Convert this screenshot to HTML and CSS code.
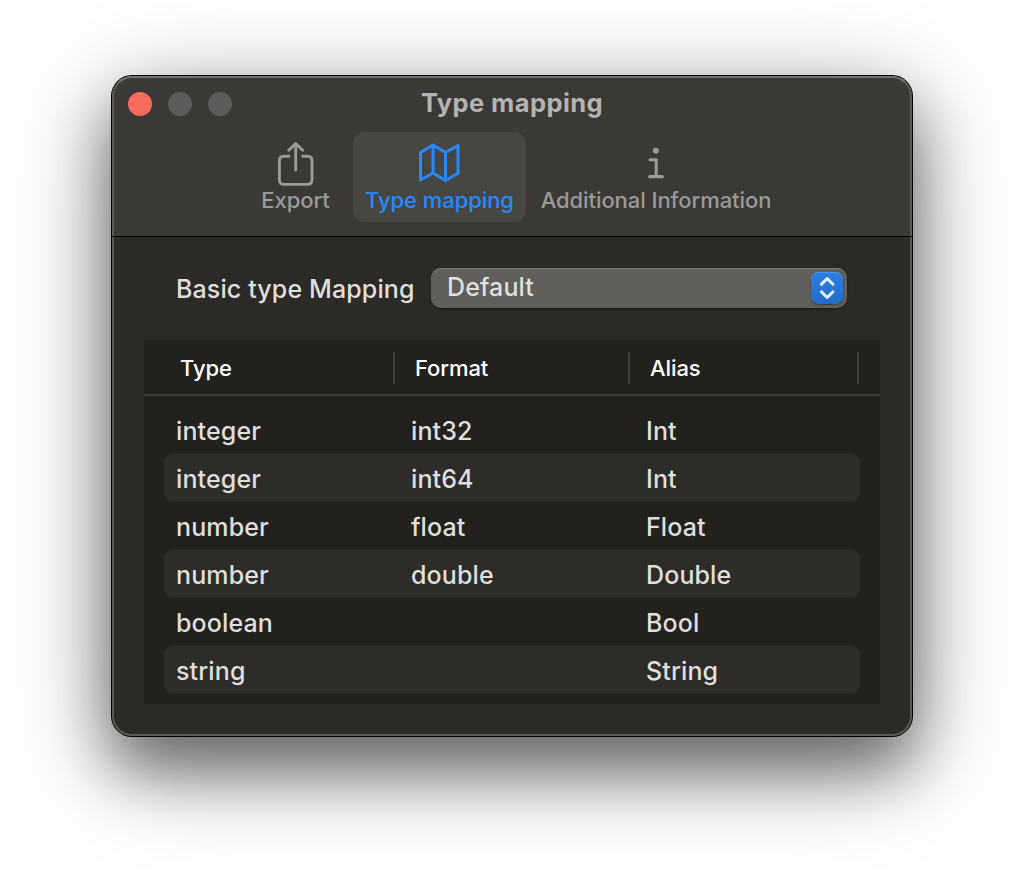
FILE: index.html
```html
<!DOCTYPE html>
<html lang="en">
<head>
<meta charset="utf-8">
<title>Type mapping</title>
<link rel="stylesheet" href="styles.css">
</head>
<body>
<main class="window">
  <header class="toolbar">
    <div class="titlebar">
      <div class="lights"><span class="light close"></span><span class="light"></span><span class="light"></span></div>
      <h1 class="title"><span>Type mapping</span></h1>
    </div>
    <nav class="tabs">
      <div class="tab export">
        <svg class="icon" width="48" height="48" viewBox="0 0 48 48" fill="none" stroke="currentColor" stroke-width="2.9" stroke-linecap="round" stroke-linejoin="round"><path d="M18 16.2H12Q7.4 16.2 7.4 20.8V39.8Q7.4 44.4 12 44.4H35.4Q40 44.4 40 39.8V20.8Q40 16.2 35.4 16.2H29.4" stroke-linecap="butt"/><path d="M23.7 30V3.8M16.7 10.2L23.7 3.6L30.7 10.2"/></svg>
        <span class="tab-label">Export</span>
      </div>
      <div class="tab selected">
        <svg class="icon" width="48" height="48" viewBox="0 0 48 48" fill="none" stroke="currentColor" stroke-width="3" stroke-linejoin="round"><path d="M4.5 12.5L17 5L29.5 12.5L42 5.5V33.3L29.5 40.5L17 33L4.5 40ZM17 5V33M29.5 12.5V40.5"/></svg>
        <span class="tab-label">Type mapping</span>
      </div>
      <div class="tab info">
        <svg class="icon" width="48" height="48" viewBox="0 0 48 48" fill="none" stroke="currentColor" stroke-width="3.1" stroke-linecap="round" stroke-linejoin="round"><circle cx="23.8" cy="10.7" r="3" fill="currentColor" stroke="none"/><path d="M18 19.7H24.2V36.6M17.6 36.6H30.4"/></svg>
        <span class="tab-label">Additional Information</span>
      </div>
    </nav>
  </header>
  <section class="content">
    <div class="field">
      <span class="field-label">Basic type Mapping</span>
      <div class="select">
        <span class="value">Default</span>
        <span class="stepper"><svg width="32" height="32" viewBox="0 0 32 32" fill="none" stroke="#e6effb" stroke-width="3" stroke-linecap="round" stroke-linejoin="round"><path d="M10.4 12.3L16.2 6.6L22 12.3M10.4 19.8L16.2 25.5L22 19.8"/></svg></span>
      </div>
    </div>
    <div class="table">
      <div class="head"><span class="th">Type</span><span class="th">Format</span><span class="th last">Alias</span></div>
      <div class="rows">
        <div class="row"><span>integer</span><span>int32</span><span>Int</span></div>
        <div class="row"><span>integer</span><span>int64</span><span>Int</span></div>
        <div class="row"><span>number</span><span>float</span><span>Float</span></div>
        <div class="row"><span>number</span><span>double</span><span>Double</span></div>
        <div class="row"><span>boolean</span><span></span><span>Bool</span></div>
        <div class="row"><span>string</span><span></span><span>String</span></div>
      </div>
    </div>
  </section>
</main>
</body>
</html>
```
FILE: styles.css
```css
* { box-sizing: border-box; }
body { margin: 0; height: 884px; padding: 76px 112px; background: #fff; overflow: hidden; font-family: Inter, "Liberation Sans", sans-serif; color: #dfdfde; }
.window { position: relative; width: 800px; height: 660px; border-radius: 20px; background: #2b2a27; box-shadow: 0 0 0 1px #000, 0 34px 56px rgba(0,0,0,.36), 0 26px 100px rgba(0,0,0,.46); }
.window::after { content: ""; position: absolute; inset: 0; border: 2px solid #5a5a57; border-top-color: #757472; border-radius: 20px; pointer-events: none; }
.toolbar { position: relative; height: 161px; background: #3a3936; border-radius: 20px 20px 0 0; }
.toolbar::after { content: ""; position: absolute; left: 0; right: 0; bottom: 0; z-index: 1; height: 1px; background: #000; }
.titlebar { display: grid; grid-template-columns: 120px 1fr 120px; height: 56px; }
.lights { display: flex; gap: 16px; padding: 16px 0 0 16px; }
.light { width: 24px; height: 24px; flex: none; border-radius: 50%; background: #5c5b59; }
.close { background: #f66b5f; }
.title { margin: 0; text-align: center; font-size: 25.5px; line-height: 54px; font-weight: 700; letter-spacing: .4px; color: #b5b4b2; white-space: nowrap; }
.tabs { display: flex; padding-left: 135px; }
.tab { display: flex; flex-direction: column; align-items: center; height: 90px; padding-top: 8px; border-radius: 12px; color: #9b9a97; }
.export { width: 97px; margin-right: 9px; }
.selected { width: 173px; background: #474643; color: #258bff; }
.info { width: 260px; }
.icon { flex: none; }
.tab-label { font-size: 22px; line-height: 24px; white-space: nowrap; font-weight: 450; letter-spacing: -.07px; }
.content { padding: 31px 32px 0; }
.field { display: flex; align-items: center; height: 40px; padding-left: 32px; font-weight: 450; }
.field-label { width: 255px; font-size: 25px; line-height: 40px; letter-spacing: .12px; white-space: nowrap; padding-top: 2px; }
.select { display: flex; align-items: center; justify-content: space-between; width: 416px; height: 40px; padding: 0 4px 0 16px; border-radius: 10px; background: #605f5b; box-shadow: inset 0 1px 0 #7d7c78, 0 1px 2px rgba(0,0,0,.5); font-size: 25px; letter-spacing: .1px; }
.value { line-height: 38px; padding-bottom: 2px; }
.stepper { width: 32px; height: 32px; border-radius: 8px; background: linear-gradient(#2a7fe2, #226dc7); box-shadow: inset 0 1px 0 #4d95e8, 0 1px 2px rgba(0,0,0,.4); }
.stepper svg { display: block; }
.table { height: 364px; margin-top: 32px; background: #22211e; }
.head { display: flex; height: 56px; padding: 12px 0 0 16px; border-bottom: 2px solid #3c3b39; color: #fff; font-size: 22px; font-weight: 500; letter-spacing: -.1px; }
.th { width: 235px; height: 32px; padding-left: 20px; line-height: 33px; border-right: 2px solid #41403d; }
.th.last { width: 229px; }
.rows { padding: 10px 20px; }
.row { display: grid; grid-template-columns: 235px 235px 1fr; height: 48px; padding-left: 12px; border-radius: 9px; font-size: 25px; line-height: 50px; font-weight: 450; letter-spacing: .12px; }
.row:nth-child(even) { background: #2d2c29; }
```
